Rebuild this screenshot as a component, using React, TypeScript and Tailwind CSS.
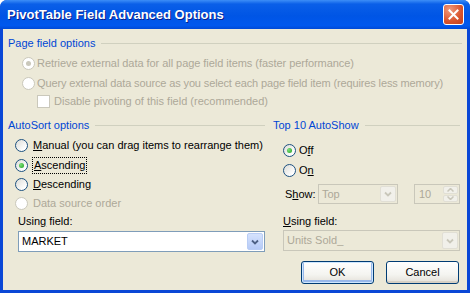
import React from "react";

const font = "font-['Liberation_Sans',Arial,sans-serif]";

function Radio({ checked = false, disabled = false }: { checked?: boolean; disabled?: boolean }) {
  return (
    <span
      className={`flex h-[13px] w-[13px] shrink-0 items-center justify-center rounded-full border ${
        disabled
          ? "border-[#CAC8BB] bg-white"
          : "border-[#1C5180] bg-[linear-gradient(135deg,#dcdcd7,#ffffff_80%)]"
      }`}
    >
      {checked && (
        <span
          className={`h-[5px] w-[5px] rounded-full ${
            disabled ? "bg-[#CAC8BB]" : "bg-[radial-gradient(circle_at_35%_35%,#7de07a,#21a121)]"
          }`}
        />
      )}
    </span>
  );
}

function Chevron({ color }: { color: string }) {
  return (
    <svg width="8" height="6" viewBox="0 0 8 6">
      <path d="M1 1.5 L4 4.5 L7 1.5" fill="none" stroke={color} strokeWidth="1.8" />
    </svg>
  );
}

function Combo({ value, disabled = false, className = "" }: { value: string; disabled?: boolean; className?: string }) {
  return (
    <div
      className={`flex items-stretch border ${
        disabled ? "border-[#C9C7BA] bg-[#ECE9D8] text-[#ACA899]" : "border-[#7F9DB9] bg-white text-black"
      } ${className}`}
    >
      <div className="flex flex-1 items-center pl-[3px]">{value}</div>
      <div
        className={`m-px flex w-[16px] items-center justify-center rounded-[2px] border ${
          disabled
            ? "border-[#E1DFD5] bg-[#F1F0EA]"
            : "border-[#B9CDF5] bg-[linear-gradient(to_bottom,#d5e2fd,#b6cbf7)]"
        }`}
      >
        <Chevron color={disabled ? "#C9C7BA" : "#4D6185"} />
      </div>
    </div>
  );
}

function Header({ label }: { label: string }) {
  return (
    <div className="flex h-[14px] items-center">
      <span className="text-[#0046D5]">{label}</span>
      <div className="ml-[6px] h-px flex-1 bg-[#D0D0BF]" />
    </div>
  );
}

function XpButton({ label, isDefault = false }: { label: string; isDefault?: boolean }) {
  return (
    <button
      className={`flex h-[23px] w-[73px] items-center justify-center rounded-[3px] border border-[#003C74] bg-[linear-gradient(to_bottom,#ffffff,#f4f4f0_60%,#e3e0d8)] text-black ${
        isDefault
          ? "shadow-[inset_0_0_0_1px_#cee7ff,inset_0_-1px_0_2px_#98b8ea]"
          : "shadow-[inset_0_-2px_0_#d6d0c5]"
      }`}
    >
      {label}
    </button>
  );
}

export default function App() {
  return (
    <div className={`${font} h-[293px] w-[470px] text-[11px] leading-none text-black`}>
      <div className="flex h-full w-full flex-col overflow-hidden rounded-t-[7px] bg-[#0A47D6]">
        {/* Title bar */}
        <div className="flex h-[29px] shrink-0 items-center bg-[linear-gradient(to_bottom,#3d8ef7_0%,#0a5fe8_14%,#0055e5_55%,#0058ee_88%,#0049d6_100%)] pl-[7px] pr-[6px]">
          <span className="flex-1 text-[13px] font-bold text-white [text-shadow:1px_1px_0_#0a1e8a]">
            PivotTable Field Advanced Options
          </span>
          <div className="flex h-[21px] w-[21px] items-center justify-center rounded-[3px] border border-white bg-[radial-gradient(circle_at_30%_25%,#f09a7c,#d9532c_60%,#c2401c)]">
            <svg width="11" height="11" viewBox="0 0 11 11">
              <path d="M1.5 1.5 L9.5 9.5 M9.5 1.5 L1.5 9.5" stroke="#fff" strokeWidth="2" strokeLinecap="square" />
            </svg>
          </div>
        </div>

        {/* Body */}
        <div className="mx-[3px] mb-[3px] flex flex-1 flex-col bg-[#ECE9D8] px-[5px] pt-[7px]">
          <Header label="Page field options" />

          <div className="mt-[3px] flex h-[20px] items-center pl-[14px] text-[#ACA899]">
            <Radio checked disabled />
            <span className="ml-[2px] tracking-[-0.05px]">Retrieve external data for all page field items (faster performance)</span>
          </div>
          <div className="flex h-[20px] items-center pl-[14px] text-[#ACA899]">
            <Radio disabled />
            <span className="ml-[2px] tracking-[-0.13px]">Query external data source as you select each page field item (requires less memory)</span>
          </div>
          <div className="flex h-[16px] items-center pl-[29px] text-[#ACA899]">
            <span className="h-[13px] w-[13px] shrink-0 border border-[#CAC8BB] bg-white" />
            <span className="ml-[4px]">Disable pivoting of this field (recommended)</span>
          </div>

          <div className="mt-[9px] flex gap-[8px]">
            {/* AutoSort */}
            <div className="flex w-[257px] flex-col">
              <Header label="AutoSort options" />
              <div className="mt-[3px] flex h-[20px] items-center pl-[7px]">
                <Radio />
                <span className="ml-[5px]">
                  <u>M</u>anual (you can drag items to rearrange them)
                </span>
              </div>
              <div className="flex h-[20px] items-center pl-[7px]">
                <Radio checked />
                <span className="ml-[4px] border border-dotted border-black px-px py-[2px]">
                  <u>A</u>scending
                </span>
              </div>
              <div className="flex h-[19px] items-center pl-[7px]">
                <Radio />
                <span className="ml-[5px]">
                  <u>D</u>escending
                </span>
              </div>
              <div className="flex h-[19px] items-center pl-[7px] text-[#ACA899]">
                <Radio disabled />
                <span className="ml-[5px]">Data source order</span>
              </div>
              <div className="mt-px flex h-[14px] items-center pl-[10px]">
                <span>
                  Usin<u>g</u> field:
                </span>
              </div>
              <Combo value="MARKET" className="ml-[10px] mt-[3px] h-[21px]" />
            </div>

            {/* Top 10 */}
            <div className="flex flex-1 flex-col pr-[2px]">
              <Header label="Top 10 AutoShow" />
              <div className="mt-[8px] flex h-[20px] items-center pl-[10px]">
                <Radio checked />
                <span className="ml-[3px]">
                  O<u>f</u>f
                </span>
              </div>
              <div className="flex h-[20px] items-center pl-[10px]">
                <Radio />
                <span className="ml-[3px]">
                  O<u>n</u>
                </span>
              </div>
              <div className="mt-[4px] flex h-[20px] items-stretch pl-[12px]">
                <span className="flex w-[33px] items-center">
                  S<u>h</u>ow:
                </span>
                <Combo value="Top" disabled className="w-[80px]" />
                <div className="ml-auto flex w-[46px] items-stretch border border-[#C9C7BA] bg-[#ECE9D8] text-[#ACA899]">
                  <div className="flex flex-1 items-center pl-[4px]">10</div>
                  <div className="m-px flex w-[15px] flex-col gap-px">
                    <div className="flex flex-1 items-center justify-center rounded-[2px] border border-[#E1DFD5] bg-[#F1F0EA]">
                      <svg width="7" height="4" viewBox="0 0 7 4">
                        <path d="M0.5 3.5 L3.5 0.5 L6.5 3.5" fill="none" stroke="#C9C7BA" strokeWidth="1.5" />
                      </svg>
                    </div>
                    <div className="flex flex-1 items-center justify-center rounded-[2px] border border-[#E1DFD5] bg-[#F1F0EA]">
                      <svg width="7" height="4" viewBox="0 0 7 4">
                        <path d="M0.5 0.5 L3.5 3.5 L6.5 0.5" fill="none" stroke="#C9C7BA" strokeWidth="1.5" />
                      </svg>
                    </div>
                  </div>
                </div>
              </div>
              <div className="mt-[10px] flex h-[14px] items-center pl-[10px]">
                <span>
                  <u>U</u>sing field:
                </span>
              </div>
              <Combo value="Units Sold_" disabled className="ml-[10px] mt-[2px] h-[21px]" />
              <div className="mt-[10px] flex justify-end gap-[12px] pr-px">
                <XpButton label="OK" isDefault />
                <XpButton label="Cancel" />
              </div>
            </div>
          </div>
        </div>
      </div>
    </div>
  );
}
